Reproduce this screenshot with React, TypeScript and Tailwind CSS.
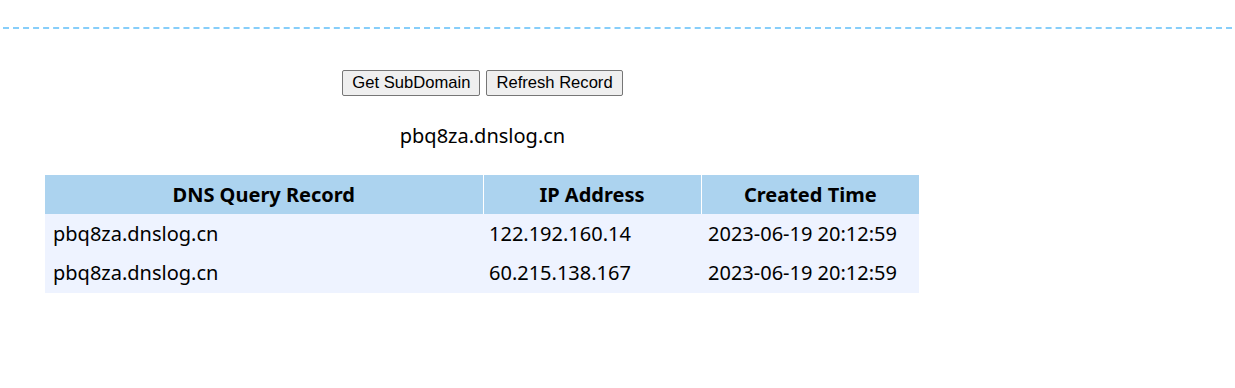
import React from "react";

const records = [
  { domain: "pbq8za.dnslog.cn", ip: "122.192.160.14", time: "2023-06-19 20:12:59" },
  { domain: "pbq8za.dnslog.cn", ip: "60.215.138.167", time: "2023-06-19 20:12:59" },
];

export default function App() {
  return (
    <div className="w-[1235px] h-[388px] bg-white text-black" style={{ fontFamily: '"Noto Sans", sans-serif' }}>
      <div className="pt-[27px] px-[3px]">
        <div className="border-t-2 border-dashed border-[#87cefa]" />
      </div>

      <div className="w-[965px]">
        <div className="flex justify-center gap-[6px] mt-[41px]" style={{ fontFamily: '"Liberation Sans", Arial, sans-serif' }}>
          <button className="h-[26px] px-[9px] text-[16.6px] border border-[#767676] rounded-[2px] bg-[#efefef]">Get SubDomain</button>
          <button className="h-[26px] px-[9px] text-[16.6px] border border-[#767676] rounded-[2px] bg-[#efefef]">Refresh Record</button>
        </div>

        <p className="text-center text-[20px] mt-[25px] leading-[30px]">pbq8za.dnslog.cn</p>

        <table className="ml-[45px] mt-[24px] w-[874px] border-collapse text-[20px]">
          <thead>
            <tr className="bg-[#acd3ef]">
              <th className="w-[438px] h-[39px] font-bold border-r border-white">DNS Query Record</th>
              <th className="w-[218px] h-[39px] font-bold border-r border-white">IP Address</th>
              <th className="h-[39px] font-bold">Created Time</th>
            </tr>
          </thead>
          <tbody>
            {records.map((r, i) => (
              <tr key={i} className="bg-[#eef3ff]">
                <td className="h-[39.5px] pl-[8px]">{r.domain}</td>
                <td className="pl-[6px]">{r.ip}</td>
                <td className="pl-[7px]">{r.time}</td>
              </tr>
            ))}
          </tbody>
        </table>
      </div>
    </div>
  );
}
